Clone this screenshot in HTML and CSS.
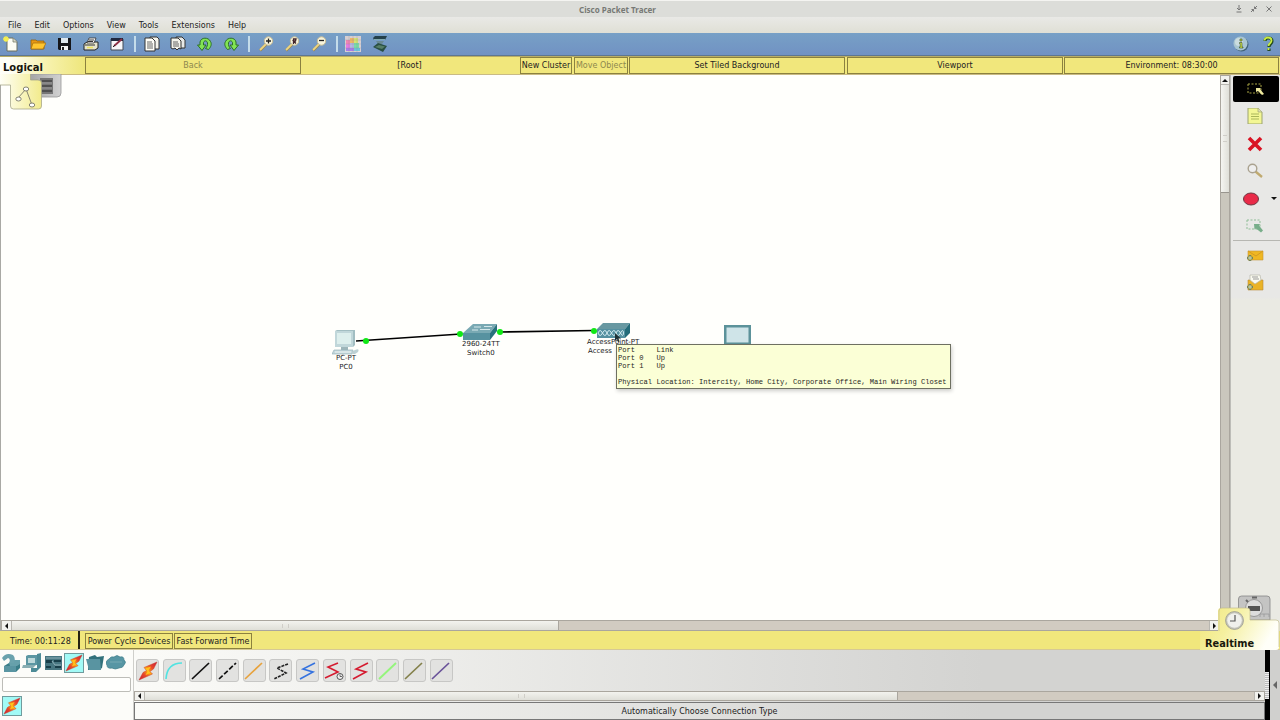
FILE: index.html
```html
<!DOCTYPE html>
<html lang="en">
<head>
  <meta charset="UTF-8">
  <meta name="viewport" content="width=device-width, initial-scale=1.0">
  <title>Cisco Packet Tracer</title>
  <link rel="stylesheet" href="styles.css">
</head>
<body>
  <!-- Shared icon shapes -->
  <svg class="defs" width="0" height="0">
    <defs>
      <linearGradient id="boltFill" x1="0" y1="1" x2="1" y2="0">
        <stop offset="0" stop-color="#c81838"/><stop offset=".3" stop-color="#e8482a"/><stop offset=".5" stop-color="#ffa812"/><stop offset=".7" stop-color="#e8482a"/><stop offset="1" stop-color="#c81838"/>
      </linearGradient>
      <linearGradient id="tabFill" x1="0" y1="0" x2="1" y2="0">
        <stop offset="0" stop-color="#fffff6"/><stop offset="1" stop-color="#f2eb8c"/>
      </linearGradient>
      <linearGradient id="realFill" x1="0" y1="0" x2="1" y2=".3">
        <stop offset="0" stop-color="#f1e77c"/><stop offset=".45" stop-color="#f5f0a0"/><stop offset="1" stop-color="#fffff8"/>
      </linearGradient>
      <linearGradient id="grayFill" x1="0" y1="0" x2="1" y2="0">
        <stop offset="0" stop-color="#a5a5a5"/><stop offset="1" stop-color="#d2d2d2"/>
      </linearGradient>
      <symbol id="bolt" viewBox="0 0 20 20">
        <path d="M19 1 6 6.500 8.500 9.500 5 11.500 1 19 14.500 13 12 10.500 15.500 8z" fill="url(#boltFill)" stroke="#c9402c" stroke-width=".5"/>
        <path d="M7.500 7.500 13 5.500 10.500 9.500 12.500 12 7.500 14 9.500 10.500z" fill="#ffc21c"/>
      </symbol>
      <symbol id="lens" viewBox="0 0 16 16">
        <path d="M2 14.500 8 8.500" stroke="#9a8750" stroke-width="2.600"/>
        <path d="M2 14 8 8" stroke="#ecd684" stroke-width="1.800"/>
        <circle cx="10.500" cy="5" r="4.200" fill="#f7f4dc" stroke="#c8bd94"/>
      </symbol>
      <symbol id="undo" viewBox="0 0 16 16">
        <path d="M11.500 13.500C14 11 15 8 13.500 5.500 11.500 1 4 1 3 6v3H.500L5 14.500 9 9H6.500V6.500C7.500 4 10 4.500 10.500 7c.3 2-.5 4-2 5.500z" fill="#82e454" stroke="#2c7026"/>
      </symbol>
    </defs>
  </svg>

  <div class="app">
    <div class="titlebar">
      <span class="title">Cisco Packet Tracer</span>
      <div class="window-buttons">
        <svg width="8" height="8" viewBox="0 0 8 8"><path d="M4 0v5M2 3l2 2 2-2M1.500 7h5" /></svg>
        <svg width="8" height="8" viewBox="0 0 8 8"><path d="M4.500 3.500 7 1M4.500 1.500v2h2M3.500 4.500 1 7M3.500 6.500v-2h-2" /></svg>
        <svg width="8" height="8" viewBox="0 0 8 8"><path d="M1.500 1.500l5 5M6.500 1.500l-5 5" /></svg>
      </div>
    </div>

    <div class="menubar">
      <span>File</span><span>Edit</span><span>Options</span><span>View</span><span>Tools</span><span>Extensions</span><span>Help</span>
    </div>

    <div class="toolbar">
      <!-- New -->
      <svg class="tool" viewBox="0 0 16 16"><path d="M4 2h6l4 3.500V15H4z" fill="#fdfdf4" stroke="#6c705e"/><path d="M10 2v4h4" fill="#dcdcc8" stroke="#6c705e" stroke-width=".7"/><path d="M3 0v6M0 3h6M1 1l4 4M5 1 1 5" stroke="#f5ef50" stroke-width="1.300"/></svg>
      <!-- Open -->
      <svg class="tool" viewBox="0 0 16 16"><path d="M1 4h5l1 1h7v8H1z" fill="#e89813" stroke="#94630a" stroke-width=".8"/><path d="M3 7h13l-3 6H1z" fill="#ffc52e" stroke="#a06c0c" stroke-width=".7"/></svg>
      <!-- Save -->
      <svg class="tool" viewBox="0 0 16 16"><path d="M2 2h13v12H3l-1-1z" fill="#15161a"/><path d="M5 2h7v5H5z" fill="#dfe8ee"/><path d="M5 10h7v4H5z" fill="#f4f4f4"/><path d="M6 11h2v3H6z" fill="#222"/></svg>
      <!-- Print -->
      <svg class="tool" viewBox="0 0 16 16"><path d="M1 8l3-2h11v6l-3 2H1z" fill="#e6e4cd" stroke="#222"/><path d="M4 7l2-5h7l-2 5z" fill="#fff" stroke="#333" stroke-width=".8"/><path d="M2 9h10M6 4h5M5 5.500h5" stroke="#333"/><path d="M4 11.500h6" stroke="#ede45e" stroke-width="1.500"/></svg>
      <!-- Activity wizard -->
      <svg class="tool" viewBox="0 0 16 16"><path d="M2 3h12v11H2z" fill="#f7f7fa" stroke="#444a55"/><path d="M2 2h12v3H2z" fill="#20293f"/><path d="M5 10 13 3" stroke="#8f3147" stroke-width="1.800"/><path d="M4 11l2-2" stroke="#222"/></svg>
      <i class="divider"></i>
      <!-- Copy -->
      <svg class="tool" viewBox="0 0 16 16"><path d="M6 1h7l2 2v10H6z" fill="#f5f5ed" stroke="#333"/><path d="M1 2h7l3 3v10H1z" fill="#fffff8" stroke="#333"/><path d="M3 6h5M3 8h6M3 10h6M3 12h6" stroke="#555" stroke-width=".9"/></svg>
      <!-- Paste -->
      <svg class="tool" viewBox="0 0 16 16"><path d="M6 1h6l3 3v8H6z" fill="#e7e9e7" stroke="#333"/><path d="M1 2h7l3 3v8l-2-1-2 2-2-2-2 1-2-1z" fill="#f3f3ea" stroke="#333"/><path d="M3 6h5M3 8h6M3 10h6" stroke="#555" stroke-width=".9"/></svg>
      <!-- Undo / Redo -->
      <svg class="tool" viewBox="0 0 16 16"><use href="#undo"/></svg>
      <svg class="tool" viewBox="0 0 16 16"><use href="#undo" transform="matrix(-1 0 0 1 16 0)"/></svg>
      <i class="divider"></i>
      <!-- Zoom in / reset / out -->
      <svg class="tool" viewBox="0 0 16 16"><use href="#lens"/><path d="M10.500 2.500v5M8 5h5" stroke="#222" stroke-width="1.300"/></svg>
      <svg class="tool" viewBox="0 0 16 16"><use href="#lens"/><path d="M9.500 8V3h2.500l-.5 2H9.500l2.500 2.500" fill="none" stroke="#43252b" stroke-width="1.300"/></svg>
      <svg class="tool" viewBox="0 0 16 16"><use href="#lens"/><path d="M8 4.500h5" stroke="#222" stroke-width="1.300"/></svg>
      <i class="divider"></i>
      <!-- Palette -->
      <svg class="tool" viewBox="0 0 16 16"><path d="M0 0h16v16H0z" fill="#d7cfd1"/><path d="M1 4h4v4H1z" fill="#f084b5"/><path d="M1 8h4v4H1z" fill="#e77be4"/><path d="M5 2h4v5H5z" fill="#f1b667"/><path d="M5 7h4v5H5z" fill="#b5b7e5"/><path d="M9 2h4v5H9z" fill="#d4e473"/><path d="M9 7h5v5H9z" fill="#79dda8"/><path d="M1 12h8v3H1z" fill="#a97bea"/><path d="M9 12h6v3H9z" fill="#69c5dc"/><path d="M0 4h16M0 8h16M0 12h16M4 0v16M8 0v16M12 0v16" stroke="#888" stroke-opacity=".4" stroke-width=".6"/></svg>
      <!-- Custom devices -->
      <svg class="tool" viewBox="0 0 16 16"><path d="M1 2l2-2h12l-2 4H2z" fill="#24414a"/><path d="M2 3.500h11" stroke="#80a9ad"/><path d="M4 5h8l-2 3H6z" fill="#6a8a94"/><path d="M1 11l5-4 9 3-4 6z" fill="#294f43"/><path d="M3 11l4-2 6 1.500-3 2.500z" fill="#567e67"/></svg>
      <div class="toolbar-help">
        <svg class="tool" viewBox="0 0 16 16"><circle cx="8.500" cy="8.500" r="7" fill="#416278"/><circle cx="7.500" cy="7.500" r="7" fill="#a9c6d1"/><circle cx="6" cy="6" r="4" fill="#cbdcdf"/><path d="M7 3h2v2H7zM6.500 6.500H9V11h1v1H6.500v-1h.7V7.500h-.7z" fill="#ddee47" stroke="#2e4426" stroke-width=".6"/></svg>
        <svg class="tool" viewBox="0 0 16 16"><path d="M5 5c0-4 7-4 7 0 0 3-3 2.500-3 6M9 12.500v2.500" fill="none" stroke="#244a22" stroke-width="3.200"/><path d="M4.500 4.500c0-4 7-4 7 0 0 3-3 2.500-3 5.500M8.500 12v2" fill="none" stroke="#c9ec42" stroke-width="1.800"/></svg>
      </div>
    </div>

    <div class="navbar">
      <div class="nav-logical">Logical</div>
      <div class="nav-button nav-back disabled">Back</div>
      <div class="nav-root">[Root]</div>
      <div class="nav-button nav-cluster">New Cluster</div>
      <div class="nav-button nav-move disabled">Move Object</div>
      <div class="nav-button nav-tiled">Set Tiled Background</div>
      <div class="nav-button nav-viewport">Viewport</div>
      <div class="nav-button nav-env">Environment: 08:30:00</div>
    </div>

    <div class="workspace">
      <!-- Logical / physical view tabs -->
      <svg class="view-tabs" width="64" height="37" viewBox="0 0 64 37">
        <path d="M30 0h31v19q0 4-4 4H38V6h-8z" fill="url(#grayFill)" stroke="#989898" stroke-width=".8"/>
        <path d="M40 4h13v16H40z" fill="#777"/><path d="M42 7h10M42 12h10M42 17h10" stroke="#444" stroke-width="1.500"/><path d="M42 9h10M42 14h10" stroke="#999"/>
        <path d="M0-1h30.500v7H38q3.500 0 3.500 3v23q0 3-3 3h-25q-3 0-3-3V11H0z" fill="url(#tabFill)"/>
        <path d="M0 11h10.500v21q0 3 3 3h25q3 0 3-3V9q0-3-3.500-3h-7.500V0" fill="none" stroke="#a8a88c" stroke-width=".8"/>
        <g fill="#fff" stroke="#777668" stroke-width=".9"><path d="M18 24l8-9 6 16" fill="none"/><ellipse cx="26" cy="15" rx="2.700" ry="2"/><ellipse cx="18.500" cy="25" rx="2.700" ry="2"/><ellipse cx="32" cy="31" rx="2.700" ry="2"/></g>
      </svg>

      <div class="canvas-column">
        <div class="canvas">
          <svg class="links" width="1219" height="545" viewBox="0 75 1219 545">
            <path d="M356 341 461 334M499 332 594 330.500" stroke="#000" stroke-width="1.700"/>
          </svg>

          <div class="device pc">
            <svg width="28" height="26" viewBox="0 0 28 26">
              <path d="M3 1 5 0h18v15l-2 2H3z" fill="#a2bec2"/><path d="M3 1h18v16H3z" fill="#c1d7da"/><path d="M5 3h14v11H5z" fill="#ddefed"/><path d="M9 17h7v3H9z" fill="#9db6ba"/>
              <path d="M2 20h19l-1 4H0z" fill="#c4d8dc" stroke="#9ab4bb" stroke-width=".7"/><path d="M3 22h16" stroke="#eff6f5"/><path d="M23 20q5-2 3 2l-3 2h-3l1-3z" fill="#bdd1d4"/>
            </svg>
            <p>PC-PT<br>PC0</p>
          </div>

          <div class="device switch">
            <svg width="36" height="17" viewBox="0 0 36 17">
              <path d="M0 9 10 0h24l-7 9z" fill="#79a9b3"/><path d="M0 9h27v7H0z" fill="#5792a0"/><path d="M27 9l7-9v7l-7 9z" fill="#28707c"/>
              <path d="M11 3h7M17 5.500h10M9 6h6M21 2.500h8" stroke="#d5e9eb" stroke-width="1.200"/>
            </svg>
            <p>2960-24TT<br>Switch0</p>
          </div>

          <div class="device access-point">
            <svg width="34" height="16" viewBox="0 0 34 16">
              <path d="M0 6 6 0h27l-5 6z" fill="#6898a1"/><path d="M0 6h28v9H0z" fill="#5590a0"/><path d="M28 6l5-6v10l-5 5z" fill="#246b79"/>
              <path d="M1 10q2-5 4.500 0t4.500 0 4.500 0 4.500 0 4.500 0 3 0M1 10q2 5 4.500 0t4.500 0 4.500 0 4.500 0 4.500 0 3 0" fill="none" stroke="#d4edf1"/>
            </svg>
            <p>AccessPoint-PT</p>
            <p class="ap-name">Access</p>
          </div>

          <div class="device tablet">
            <svg width="28" height="20" viewBox="0 0 28 20">
              <path d="M0 0h27v20H0z" fill="#5c929a"/><path d="M2.500 2.500h22v15h-22z" fill="#cfe4e8"/>
            </svg>
          </div>

          <i class="port port-pc"></i>
          <i class="port port-switch-in"></i>
          <i class="port port-switch-out"></i>
          <i class="port port-ap"></i>

          <pre class="tooltip">Port     Link
Port 0   Up
Port 1   Up

Physical Location: Intercity, Home City, Corporate Office, Main Wiring Closet</pre>
          <svg class="cursor" width="8" height="10" viewBox="0 0 8 10"><path d="M1 0v8l2-2 1 3 1.500-.5-1-3H7z" fill="#203236"/></svg>
        </div>
        <div class="hscroll">
          <span class="arrow left"></span><span class="thumb thumb-main"></span><span class="track"></span><span class="arrow right"></span>
        </div>
      </div>

      <div class="vscroll">
        <span class="arrow up"></span><span class="thumb"></span>
      </div>

      <div class="side-tools">
        <!-- Select -->
        <div class="side-tool active"><svg width="20" height="16" viewBox="0 0 20 16"><path d="M2 3h13v9H2z" fill="none" stroke="#a9a545" stroke-dasharray="2 1.500"/><path d="M10 7h5l-1 1 4 5-2 1-4-4-2 1z" fill="#efeaa0"/></svg></div>
        <!-- Note -->
        <div class="side-tool"><svg width="16" height="16" viewBox="0 0 16 16"><path d="M1 0h10l4 4v12H1z" fill="#f3f794" stroke="#9da470"/><path d="M11 0v4h4" fill="#dfe0b4" stroke="#9da470" stroke-width=".7"/><path d="M4 6h8M4 8.500h8M4 11h8" stroke="#aab75a"/></svg></div>
        <!-- Delete -->
        <div class="side-tool"><svg width="16" height="16" viewBox="0 0 16 16"><path d="M2 2l12 12M14 2 2 14" stroke="#d91424" stroke-width="3.600"/></svg></div>
        <!-- Inspect -->
        <div class="side-tool"><svg width="16" height="16" viewBox="0 0 16 16"><path d="M8.500 8.500 15 14" stroke="#c0aa70" stroke-width="2.300"/><circle cx="5.500" cy="5.500" r="4.300" fill="#eee" stroke="#aaa28f" stroke-width="1.400"/></svg></div>
        <!-- Draw ellipse -->
        <div class="side-tool shape"><svg width="16" height="14" viewBox="0 0 16 14"><ellipse cx="8" cy="7" rx="7.500" ry="6" fill="#e92a48" stroke="#6e3540"/></svg><span class="more"></span></div>
        <!-- Resize -->
        <div class="side-tool"><svg width="18" height="16" viewBox="0 0 18 16"><path d="M1 2h13v9H1z" fill="none" stroke="#8fbd96" stroke-dasharray="2 1.500"/><path d="M8 6h6l-1 1.500 4 5-2 2-5-4-1.500 1z" fill="#78ae8a"/></svg></div>
        <hr>
        <!-- Simple and complex PDU -->
        <div class="side-tool"><svg width="18" height="16" viewBox="0 0 18 16"><path d="M2 3h15v9H2z" fill="#efb722" stroke="#c5963a" stroke-width=".6"/><path d="M2 3l8 5 7-5" fill="none" stroke="#d49b23"/><path d="M4 7v6M1 10h6" stroke="#75845a" stroke-width="2.600"/><path d="M4 8v4M2 10h4" stroke="#d4dfb2"/></svg></div>
        <div class="side-tool"><svg width="18" height="18" viewBox="0 0 18 18"><path d="M2 6h15v10H2z" fill="#eab326" stroke="#b88c3d" stroke-width=".6"/><path d="M4 1h10l1 5-6 4-5-4z" fill="#fafaf0" stroke="#b6b6a9" stroke-width=".7"/><path d="M6 3h6M7 5h6" stroke="#999"/><path d="M4 10v6M1 13h6" stroke="#75845a" stroke-width="2.600"/><path d="M4 11v4M2 13h4" stroke="#d4dfb2"/></svg></div>
      </div>
    </div>

    <div class="timebar">
      <div class="time">Time: 00:11:28</div>
      <div class="nav-button power">Power Cycle Devices</div>
      <div class="nav-button forward">Fast Forward Time</div>
      <!-- Realtime / simulation tabs -->
      <div class="mode">
        <svg width="80" height="55" viewBox="0 0 80 55">
          <path d="M38.500 25V4q0-3 3-3H67q3 0 3 3v21z" fill="#c4c4c3" stroke="#858585" stroke-width=".8"/>
          <circle cx="54" cy="13" r="8.500" fill="#ddd" stroke="#999"/><path d="M48 11h12v5H48z" fill="#555"/><path d="M52 2.500h5M46 5l2 2" stroke="#666" stroke-width="2"/><path d="M60 22v-3h4v3M64 19h5v3" fill="none" stroke="#999" stroke-width=".8"/>
          <path d="M0 36h18V16q0-3 3-3h26q3 0 3 3v9h26q3 0 3 3v24q0 3-3 3H0z" fill="url(#realFill)"/>
          <path d="M19 36V16q0-3 3-3h25q3 0 3 3v9h26q3 0 3 3v24" fill="none" stroke="#c3bd91" stroke-width=".7"/>
          <circle cx="34.500" cy="25.500" r="9" fill="#c4c4b8" stroke="#888" stroke-width=".6"/><circle cx="34.500" cy="25.500" r="7.300" fill="#f0f0ec"/><path d="M35 20v6h-5" fill="none" stroke="#555" stroke-width="1.200"/>
        </svg>
        <span>Realtime</span>
      </div>
    </div>

    <div class="bottom">
      <div class="categories">
        <div class="category-row">
          <!-- Routers -->
          <svg viewBox="0 0 20 20"><path d="M3 13l5-3h11v5l-4 4H3z" fill="#397d88"/><path d="M3 13h12v6H3z" fill="#5995a2"/><path d="M8 10l3-3h8v4l-3 2H9z" fill="#66a0ab"/><path d="M1 5q4-6 11-3 3 3 1 8H8q2-4-1-5L3 8z" fill="#6aa2ad"/></svg>
          <!-- End devices -->
          <svg viewBox="0 0 20 20"><path d="M4 3l2-1h9v10H4z" fill="#5c97a3"/><path d="M6 5h7v5H6z" fill="#bdd8da"/><path d="M15 1l4-1v14l-5 5h-5v-4h6z" fill="#4d8b97"/><path d="M1 12h13l-3 3H0z" fill="#89aeb3"/></svg>
          <!-- Components -->
          <svg viewBox="0 0 20 20"><path d="M2 3h17v14H2z" fill="#477681"/><path d="M3 7h6v3H3zM11 7h7v2h-7zM3 13h5v2H3zM12 13h6v2h-6z" fill="#183e49"/><path d="M3 5h15M9 8l3 4h6" fill="none" stroke="#8fb0b8"/></svg>
          <span class="selected"><svg viewBox="0 0 20 20"><use href="#bolt"/></svg></span>
          <!-- Miscellaneous -->
          <svg viewBox="0 0 20 20"><path d="M4 4l6-2 2 2 7-1-2 12-3 2H3z" fill="#32717b"/><path d="M1 6h14l1 11H4z" fill="#5994a1"/></svg>
          <!-- Multiuser cloud -->
          <svg viewBox="0 0 20 20"><path d="M3 6q2-3 5-2 3-3 6 0 4-1 4 3 3 2 0 5-1 3-5 3-4 2-7 0-5 1-5-3-3-3 2-6z" fill="#5796a4" stroke="#407e8a" stroke-width=".7"/><path d="M4 9h12" stroke="#78aab3"/></svg>
        </div>
        <input class="device-search" type="text">
        <span class="selected connection"><svg viewBox="0 0 20 20"><use href="#bolt"/></svg></span>
      </div>

      <div class="palette">
        <div class="cable-row">
          <button><svg viewBox="0 0 20 20"><use href="#bolt"/></svg></button>
          <button><svg viewBox="0 0 20 20"><path d="M2 18Q3 2 18 2" stroke="#51e3e1" stroke-width="1.600"/></svg></button>
          <button><svg viewBox="0 0 20 20"><path d="M1 18 18 2" stroke="#111" stroke-width="1.700"/></svg></button>
          <button><svg viewBox="0 0 20 20"><path d="M1 18 18 2" stroke="#111" stroke-width="1.700" stroke-dasharray="5 2"/></svg></button>
          <button><svg viewBox="0 0 20 20"><path d="M1 18 18 2" stroke="#e7a23c" stroke-width="1.700"/></svg></button>
          <button><svg viewBox="0 0 20 20"><path d="M17 3 6 7l9 5-12 6" stroke="#222" stroke-width="1.600" stroke-dasharray="3 1"/></svg></button>
          <button><svg viewBox="0 0 20 20"><path d="M17 2 5 8l10 3L2 18" stroke="#3673df" stroke-width="1.600"/></svg></button>
          <button><svg viewBox="0 0 20 20"><path d="M14 2 4 6l10 5L1 17" stroke="#d51b30" stroke-width="1.600"/><circle cx="16" cy="15.500" r="3" fill="#eee" stroke="#333" stroke-width=".8"/><path d="M16 13.500v2h2" stroke="#333" stroke-width=".7"/></svg></button>
          <button><svg viewBox="0 0 20 20"><path d="M17 2 5 8l10 3L2 18" stroke="#d51b30" stroke-width="1.600"/></svg></button>
          <button><svg viewBox="0 0 20 20"><path d="M1 18 18 2" stroke="#94f57b" stroke-width="1.900"/></svg></button>
          <button><svg viewBox="0 0 20 20"><path d="M1 18 18 2" stroke="#83804a" stroke-width="1.700"/></svg></button>
          <button><svg viewBox="0 0 20 20"><path d="M1 18 18 2" stroke="#695299" stroke-width="1.700"/></svg></button>
        </div>
        <div class="hscroll">
          <span class="arrow left"></span><span class="thumb thumb-cables"></span><span class="track"></span><span class="arrow right"></span>
        </div>
        <div class="status">Automatically Choose Connection Type</div>
      </div>
      <div class="splitter"><i></i></div>
      <div class="collapse"><i></i></div>
    </div>
  </div>
</body>
</html>
```

FILE: styles.css
```css
* {
  box-sizing: border-box;
}

body {
  margin: 0;
  font-family: "DejaVu Sans", sans-serif;
  font-size: 8px;
  color: #222;
  background-color: #e8e8e4;
  overflow: hidden;
}

svg {
  display: block;
  flex-shrink: 0;
}

.defs {
  position: absolute;
}

.app {
  width: 1280px;
  height: 720px;
  display: flex;
  flex-direction: column;
}

.titlebar {
  height: 17px;
  display: flex;
  align-items: center;
  border-top: 1px solid #f4f4f1;
  background-color: #dcddd9;
}

.title {
  flex: 1;
  text-align: center;
  font: bold 8px "Noto Sans", sans-serif;
  color: #777975;
}

.window-buttons {
  display: flex;
  gap: 7px;
  padding-right: 7px;
}

.window-buttons svg {
  fill: none;
  stroke: #777;
  stroke-width: 1;
}

.menubar {
  height: 16px;
  display: flex;
  align-items: center;
  gap: 13px;
  padding-left: 8px;
  background: linear-gradient(#e9e9e6, #dfdfd5);
}

.toolbar {
  height: 23px;
  display: flex;
  align-items: center;
  gap: 10.6px;
  padding: 0 4px 0 3px;
  border-bottom: 1px solid #5e7790;
  background: linear-gradient(#77a0c6, #7192c3);
}

.tool {
  width: 16px;
  height: 16px;
}

.divider {
  width: 2px;
  height: 16px;
  margin: 0 -3.4px 0 -1.6px;
  background-color: #c4dcea;
}

.toolbar-help {
  display: flex;
  gap: 11px;
  margin-left: auto;
}

.navbar {
  height: 19px;
  display: flex;
  align-items: stretch;
  background-color: #f1e77c;
  border-top: 1px solid #b9ad66;
  border-bottom: 1px solid #cabb84;
}

.nav-logical {
  width: 85px;
  padding: 4px 0 0 3px;
  font-size: 10px;
  line-height: 13px;
  font-weight: bold;
  color: #15150c;
  background: linear-gradient(90deg, #fffff8 10%, #f7f2ae 55%, #eee67b);
}

.nav-button {
  display: flex;
  align-items: center;
  justify-content: center;
  border: 1px solid #8b813f;
  white-space: nowrap;
}

.nav-root {
  width: 219px;
  padding-right: 2px;
  display: flex;
  align-items: center;
  justify-content: center;
}

.nav-back { width: 216px; }
.nav-cluster { width: 52px; margin-right: 2px; }
.nav-move { width: 54px; margin-right: 1px; }
.nav-tiled { width: 216px; margin-right: 2px; }
.nav-viewport { width: 216px; margin-right: 1px; }
.nav-env { width: 215px; }

.disabled {
  color: #8d874e;
}

.workspace {
  position: relative;
  height: 556px;
  display: flex;
  background-color: #fffffc;
}

.view-tabs {
  position: absolute;
  left: 0;
  top: -1px;
  z-index: 2;
}

.canvas-column {
  width: 1220px;
  display: flex;
  flex-direction: column;
  border-left: 1px solid #a9a9a4;
}

.canvas {
  position: relative;
  flex: 1;
}

.links {
  position: absolute;
  left: -1px;
  top: 0;
}

.device {
  position: absolute;
  display: flex;
  flex-direction: column;
  align-items: center;
  font-size: 7px;
  line-height: 8.500px;
  text-align: center;
  white-space: nowrap;
}

.device p {
  margin: 0;
}

.pc { left: 331px; top: 255px; }
.pc p { margin-top: -2px; }
.switch { left: 461px; top: 249px; }
.switch p { margin-top: -1px; }
.access-point { left: 586px; top: 248px; }
.access-point svg { margin-left: 1px; }
.access-point p { margin-top: -1px; }

.access-point .ap-name {
  align-self: flex-start;
  margin: 0 0 0 1px;
}

.tablet { left: 723px; top: 250px; }

.port {
  position: absolute;
  width: 6px;
  height: 6px;
  border-radius: 50%;
  background-color: #10e815;
}

.port-pc { left: 362px; top: 263px; }
.port-switch-in { left: 456px; top: 256px; }
.port-switch-out { left: 496px; top: 254px; }
.port-ap { left: 590px; top: 253px; }

.tooltip {
  position: absolute;
  left: 615px;
  top: 269px;
  width: 335px;
  height: 45px;
  margin: 0;
  padding: 1px;
  font: 7.120px/8px "Liberation Mono", monospace;
  color: #26261c;
  background-color: #fbffd6;
  border: 1px solid #6e7061;
  box-shadow: 1px 2px 4px rgba(0, 0, 0, 0.2);
}

.cursor {
  position: absolute;
  left: 613px;
  top: 258px;
}

.hscroll {
  height: 11px;
  display: flex;
  border: 1px solid #aaa69e;
  background-color: #d1cbc1;
}

.arrow {
  width: 10px;
  display: flex;
  align-items: center;
  justify-content: center;
  background-color: #f2f2ee;
}

.arrow::before {
  content: "";
  border: 3px solid transparent;
}

.left { border-right: 1px solid #b9b7b1; }
.right { border-left: 1px solid #b9b7b1; }

.left::before {
  border-right-color: #111;
  border-left-width: 0;
}

.right::before {
  border-left-color: #111;
  border-right-width: 0;
}

.up::before {
  border-bottom-color: #111;
  border-top-width: 0;
}

.thumb {
  display: flex;
  align-items: center;
  justify-content: center;
  border-right: 1px solid #aaa69e;
  background: linear-gradient(#f3f3ee, #dfdfd8);
}

.thumb::before {
  content: "";
  width: 5px;
  height: 4px;
  border-left: 1px solid #d0cec8;
  border-right: 1px solid #d0cec8;
}

.thumb-main { width: 547px; }
.thumb-cables { width: 753px; }

.track {
  flex: 1;
}

.vscroll {
  width: 10px;
  height: 545px;
  border: 1px solid #aaa69e;
  background-color: #cac7bd;
}

.vscroll .arrow {
  width: 8px;
  height: 9px;
  border-bottom: 1px solid #b9b7b1;
}

.vscroll .thumb {
  height: 108px;
  border-right: 0;
  border-bottom: 1px solid #98958e;
  background: linear-gradient(90deg, #f5f5f1, #dfdfd8);
}

.vscroll .thumb::before {
  width: 4px;
  height: 5px;
  border: solid #d0cec8;
  border-width: 1px 0;
}

.side-tools {
  flex: 1;
  padding-left: 2px;
  border-left: 1px solid #bdbdb8;
  background: linear-gradient(#e8e8e6 0 222px, #eaeae3 225px);
}

.side-tool {
  position: relative;
  height: 27.500px;
  display: flex;
  align-items: center;
  justify-content: center;
  padding: 1px 3px 0 0;
}

.side-tool.active {
  width: 46px;
  height: 26px;
  margin-top: 1px;
  padding: 0;
  border-radius: 2px;
  background-color: #000;
}

.side-tool.shape {
  padding-right: 11px;
}

.more {
  position: absolute;
  right: 3px;
  top: 12px;
  border: 3px solid transparent;
  border-top-color: #111;
  border-bottom-width: 0;
}

.side-tools hr {
  margin: 0 0 1px;
  border: 0;
  border-top: 1px solid #b7b7b2;
}

.timebar {
  position: relative;
  height: 19px;
  display: flex;
  align-items: stretch;
  background-color: #f1e77c;
  border-bottom: 1px solid #d6c995;
}

.time {
  width: 80px;
  margin-right: 5px;
  padding: 2px 0 0 10px;
  display: flex;
  align-items: center;
  border-right: 2px solid #242311;
}

.power { width: 88px; margin-right: 1px; }
.forward { width: 78px; }
.power, .forward { margin-top: 2px; }

.mode {
  position: absolute;
  left: 1200px;
  bottom: -1px;
  z-index: 3;
}

.mode span {
  position: absolute;
  left: 5px;
  bottom: 1px;
  font-size: 9.800px;
  font-weight: bold;
  color: #18180c;
}

.bottom {
  height: 70px;
  display: flex;
  background-color: #fcfcf9;
}

.categories {
  width: 134px;
  padding: 3px 2px 0 1px;
  border-right: 1px solid #cfcfcb;
}

.category-row {
  display: flex;
  gap: 1px;
}

.category-row svg {
  width: 20px;
  height: 20px;
}

.selected {
  width: 20px;
  height: 20px;
  display: block;
  border: 1px solid #709b9d;
  background-color: #a2faf6;
}

.selected svg {
  width: 18px;
  height: 18px;
}

.device-search {
  display: block;
  width: 129px;
  height: 15px;
  margin: 4px 0 4px 1px;
  padding: 0 3px;
  font-size: 8px;
  border: 1px solid #bdbdb8;
  border-radius: 2px;
  background-color: #fffffd;
}

.connection {
  margin-left: 1px;
}

.palette {
  width: 1131px;
  background: linear-gradient(90deg, #fbfbf8, #d3d3d1 75%);
}

.cable-row {
  height: 41px;
  display: flex;
  align-items: center;
  gap: 3.700px;
  padding-left: 2px;
}

.cable-row button {
  width: 23px;
  height: 23px;
  display: flex;
  align-items: center;
  justify-content: center;
  padding: 0;
  border: 1px solid #c7c7c5;
  border-radius: 3px;
  background-color: #e2e2e0;
}

.cable-row svg {
  width: 20px;
  height: 20px;
  fill: none;
}

.palette .hscroll {
  height: 10px;
}

.status {
  height: 18px;
  margin-top: 1px;
  display: flex;
  align-items: center;
  justify-content: center;
  border: 1px solid #777;
}

.splitter {
  width: 5px;
  display: flex;
  align-items: center;
  background-color: #000;
}

.splitter i {
  width: 4px;
  height: 27px;
  background: repeating-linear-gradient(#eee 0 1px, #bbb 1px 2px);
}

.collapse {
  flex: 1;
  display: flex;
  align-items: center;
  justify-content: center;
  background-color: #d0d0ce;
}

.collapse i {
  border: 4px solid transparent;
  border-right-color: #666;
  border-left-width: 0;
}
```
